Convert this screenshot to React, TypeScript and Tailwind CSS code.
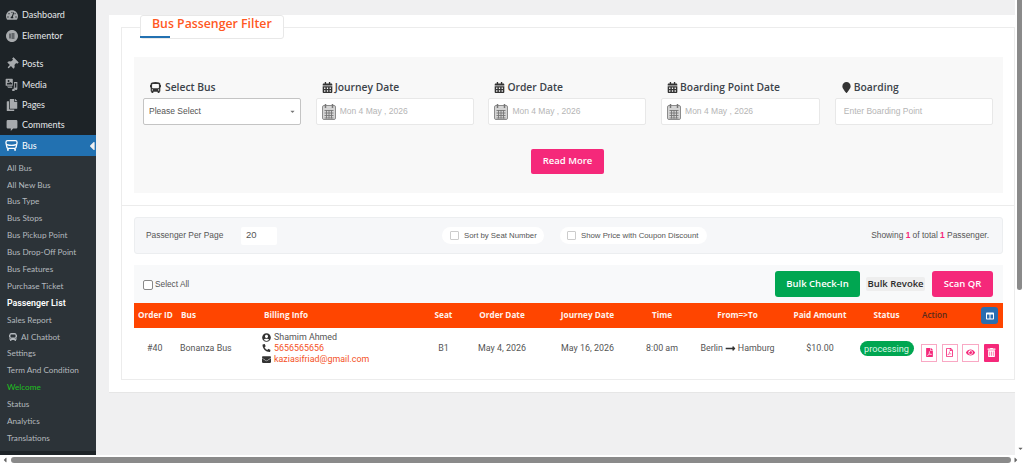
import React from 'react';
import { FaBus, FaCalendarAlt, FaMapMarker, FaUserCircle, FaPhoneAlt, FaEnvelope, FaLongArrowAltRight, FaTrashAlt, FaEye, FaFilePdf, FaRegFilePdf, FaColumns, FaThumbtack, FaCopy, FaCaretDown, FaCaretLeft, FaCaretRight, FaTachometerAlt } from 'react-icons/fa';
import { SiElementor } from 'react-icons/si';

const MediaIcon = () => (
  <svg width="13" height="13" viewBox="0 0 20 20" fill="currentColor">
    <path d="M1 2a1 1 0 0 1 1-1h9a1 1 0 0 1 1 1v9a1 1 0 0 1-1 1H2a1 1 0 0 1-1-1V2zm3 2.5a1.5 1.5 0 1 0 3 0 1.5 1.5 0 0 0-3 0zM3 10h8V8L8 6 6 8 5 7l-2 1.5V10z" fillRule="evenodd" />
    <path d="M14 6h5v10.5a2 2 0 1 1-1.5-1.9V8H15v10.5a2 2 0 1 1-1.5-1.9L14 6zM3 13h8v2H5l-2-2z" />
  </svg>
);

const CommentIcon = () => (
  <svg width="12" height="13" viewBox="0 0 20 20" fill="currentColor">
    <path d="M3 1h14a2 2 0 0 1 2 2v10a2 2 0 0 1-2 2h-5l-4 4v-4H3a2 2 0 0 1-2-2V3a2 2 0 0 1 2-2z" />
  </svg>
);

const BusOutlineIcon = () => (
  <svg width="13" height="13" viewBox="0 0 20 20" fill="none" stroke="currentColor" strokeWidth="2">
    <path d="M4 2.5h12c1.5 0 2.5 1 2.5 2.5v1L17 13c-.2 1-1 1.500-2 1.500H5c-1 0-1.800-.5-2-1.500L1.500 6V5c0-1.500 1-2.500 2.500-2.500z" />
    <path d="M3 8.500c4 1.500 10 1.500 14 0" />
    <path d="M4.500 15v3M15.500 15v3" strokeWidth="2.500" />
  </svg>
);

const GridCalendar = () => (
  <svg width="14" height="16" viewBox="0 0 14 16" className="shrink-0">
    <rect x="0.500" y="1.500" width="13" height="14" rx="1.500" fill="#d4d4d4" stroke="#8c8c8c" />
    <path d="M3.500 0v4M10.500 0v4" stroke="#777" strokeWidth="1.500" />
    <path d="M2.500 6.500h9M2.500 9h9M2.500 11.500h9M2.500 14h9M4.500 6v8.500M7 6v8.500M9.500 6v8.500" stroke="#777" strokeWidth="0.900" />
  </svg>
);

const topMenu = [
  { label: 'Posts', icon: <FaThumbtack size={12} className="rotate-45" /> },
  { label: 'Media', icon: <MediaIcon /> },
  { label: 'Pages', icon: <FaCopy size={12} /> },
  { label: 'Comments', icon: <CommentIcon /> },
];

const subMenu = ['All Bus', 'All New Bus', 'Bus Type', 'Bus Stops', 'Bus Pickup Point', 'Bus Drop-Off Point', 'Bus Features', 'Purchase Ticket'];
const subMenu2 = ['Settings', 'Term And Condition'];
const subMenu3 = ['Status', 'Analytics', 'Translations'];

const columns = 'grid grid-cols-[41px_83px_162px_47px_70px_101px_48px_103px_62px_71px_81px]';

const MenuRow = ({ label, icon }: { label: string; icon: React.ReactNode }) => (
  <div className="flex h-[20.4px] items-center text-[#e4e7e9]">
    <span className="flex w-[22px] justify-center pl-[1px] text-[#a7aaad]">{icon}</span>
    <span>{label}</span>
  </div>
);

const SubRow = ({ children, className = 'text-[#b4b9be]' }: { children: React.ReactNode; className?: string }) => (
  <div className={`flex h-[16.9px] items-center pl-[7px] ${className}`}>{children}</div>
);

const DateField = ({ label, width }: { label: string; width: string }) => (
  <div className={width}>
    <div className="mb-[3px] mt-[1px] flex h-[15px] items-center gap-[2px] pl-[6px] font-semibold text-[#3c434a]">
      <FaCalendarAlt size={11} className="text-[#333]" />
      <span>{label}</span>
    </div>
    <div className="flex h-[27px] items-center gap-[4px] rounded-[2px] border border-[#e8e8e8] bg-white pl-[5px] font-['Liberation_Sans',sans-serif] text-[8.500px] text-[#b5b5b5]">
      <GridCalendar />
      <span>Mon 4 May , 2026</span>
    </div>
  </div>
);

const ActionBox = ({ children }: { children: React.ReactNode }) => (
  <span className="flex h-[18px] w-[16px] items-center justify-center border border-[#f9a8c4] text-[#f5287a]">{children}</span>
);

export default function App() {
  return (
    <div className="flex h-[464px] w-[1024px] flex-col overflow-hidden bg-[#f0f0f1] font-['Open_Sans',sans-serif]">
      <div className="flex h-[455px]">
        {/* admin menu */}
        <aside className="flex w-[96px] shrink-0 flex-col bg-[#1d2327] pt-[5px] font-['Lato',sans-serif] text-[9px]">
          <MenuRow label="Dashboard" icon={<FaTachometerAlt size={12} />} />
          <MenuRow label="Elementor" icon={<SiElementor size={12} />} />
          <div className="h-[8px]" />
          {topMenu.map((m) => (
            <MenuRow key={m.label} label={m.label} icon={m.icon} />
          ))}
          <div className="relative flex h-[21px] items-center bg-[#2271b1] text-white">
            <span className="flex w-[22px] justify-center pl-[1px]"><BusOutlineIcon /></span>
            <span>Bus</span>
            <FaCaretLeft size={14} className="absolute right-[-3px] text-[#f0f0f1]" />
          </div>
          <div className="flex h-[295px] flex-col bg-[#2c3338] pt-[3px] text-[8.200px] leading-none">
            {subMenu.map((s) => <SubRow key={s}>{s}</SubRow>)}
            <SubRow className="font-['Roboto',sans-serif] text-[8.800px] font-semibold text-white">Passenger List</SubRow>
            <SubRow>Sales Report</SubRow>
            <SubRow><FaBus size={8} className="ml-[2px] mr-[4px]" />AI Chatbot</SubRow>
            {subMenu2.map((s) => <SubRow key={s}>{s}</SubRow>)}
            <SubRow className="text-[#1fc01f]">Welcome</SubRow>
            {subMenu3.map((s) => <SubRow key={s}>{s}</SubRow>)}
          </div>
        </aside>

        {/* page */}
        <main className="w-[919px] shrink-0 pl-[13px] pt-[15px]">
          <div className="relative h-[378px] border-b border-[#e6e6e6] bg-white pl-[12px] pt-[12px]">
            <div className="absolute left-[31px] top-0 z-10 h-[24px] w-[144px] rounded-[3px] border border-[#e8e8e8] bg-white pl-[11px] text-[12.300px] font-semibold leading-[16px] text-[#ff5722]">
              Bus Passenger Filter
              <span className="absolute bottom-0 left-[-1px] h-[2px] w-[30px] bg-[#2271b1]" />
            </div>

            <section className="h-[178px] border-l border-r border-t border-[#ececec] pl-[12px] pr-[11px] pt-[29px]">
              <div className="flex h-[136px] flex-col bg-[#f8f8f8] pl-[9px] pt-[22px] text-[10.300px]">
                <div className="flex gap-[14.700px]">
                  <div className="w-[158px]">
                    <div className="mb-[3px] mt-[1px] flex h-[15px] items-center gap-[4px] pl-[7px] font-semibold text-[#3c434a]">
                      <FaBus size={11} className="text-[#333]" />
                      <span>Select Bus</span>
                    </div>
                    <div className="flex h-[27px] items-center justify-between rounded-[2px] border border-[#c4c4c4] bg-white pl-[5px] pr-[4px] font-['Liberation_Sans',sans-serif] text-[8.500px] text-[#555]">
                      <span>Please Select</span>
                      <FaCaretDown size={7} className="text-[#777]" />
                    </div>
                  </div>
                  <DateField label="Journey Date" width="w-[158px]" />
                  <DateField label="Order Date" width="w-[158px]" />
                  <DateField label="Boarding Point Date" width="w-[159px]" />
                  <div className="w-[158px]">
                    <div className="mb-[3px] mt-[1px] flex h-[15px] items-center gap-[2px] pl-[6px] font-semibold text-[#3c434a]">
                      <FaMapMarker size={11} className="text-[#333]" />
                      <span>Boarding</span>
                    </div>
                    <div className="flex h-[27px] items-center rounded-[2px] border border-[#e8e8e8] bg-white pl-[8px] font-['Liberation_Sans',sans-serif] text-[8.500px] text-[#b5b5b5]">
                      Enter Boarding Point
                    </div>
                  </div>
                </div>
                <button className="ml-[388px] mt-[24px] h-[25px] w-[73px] rounded-[2px] bg-[#f5287a] text-[9.500px] font-semibold text-white">Read More</button>
              </div>
            </section>

            <section className="h-[175px] border-b border-l border-r border-t border-[#ececec] pl-[12px] pr-[11px] pt-[11px]">
              <div className="flex h-[37px] items-center rounded-[3px] border border-[#eceef0] bg-[#f6f7f9] pl-[11px] pr-[13px] font-['Liberation_Sans',sans-serif] text-[8.400px] text-[#555]">
                <span className="w-[95px]">Passenger Per Page</span>
                <span className="flex h-[18px] w-[36px] items-center rounded-[2px] bg-white pl-[5px] text-[9.500px]">20</span>
                <span className="ml-[165px] flex h-[17px] w-[102px] items-center gap-[5px] rounded-full bg-white pl-[8px] text-[7.800px]">
                  <span className="h-[9px] w-[9px] rounded-[1px] border border-[#ccc]" />Sort by Seat Number
                </span>
                <span className="ml-[16px] flex h-[17px] w-[147px] items-center gap-[5px] rounded-full bg-white pl-[7px] text-[7.800px]">
                  <span className="h-[9px] w-[9px] rounded-[1px] border border-[#ccc]" />Show Price with Coupon Discount
                </span>
                <span className="ml-auto">Showing <b className="text-[#f5287a]">1</b> of total <b className="text-[#f5287a]">1</b> Passenger.</span>
              </div>

              <div className="mt-[11px] flex h-[38px] items-center bg-[#f8f9fa] pl-[9px] pr-[10px]">
                <span className="flex items-center gap-[2px] font-['Liberation_Sans',sans-serif] text-[8.300px] text-[#555]">
                  <span className="mt-[1px] h-[10px] w-[10px] rounded-[2px] border border-[#888] bg-white" />Select All
                </span>
                <button className="ml-auto h-[26px] w-[85px] rounded-[3px] bg-[#00a651] text-[9.500px] font-semibold text-white">Bulk Check-In</button>
                <button className="ml-[6px] h-[14px] w-[59px] rounded-[2px] bg-[#eeeeee] text-[9.500px] font-semibold text-[#2b2b2b]">Bulk Revoke</button>
                <button className="ml-[7px] h-[26px] w-[61px] rounded-[3px] bg-[#f5287a] text-[9.500px] font-semibold text-white">Scan QR</button>
              </div>

              <div className={`${columns} relative h-[25px] items-center bg-[#ff4500] text-[8.200px] font-bold text-[#fdf3ee]`}>
                <span className="pl-[4px]">Order ID</span>
                <span className="pl-[6px]">Bus</span>
                <span className="pl-[6px]">Billing Info</span>
                <span className="text-center">Seat</span>
                <span className="text-center">Order Date</span>
                <span className="text-center">Journey Date</span>
                <span className="text-center">Time</span>
                <span className="text-center">From=&gt;To</span>
                <span className="text-center">Paid Amount</span>
                <span className="text-center">Status</span>
                <span className="font-semibold text-[#5a2a1a]">Action</span>
                <span className="absolute right-[5px] top-[4px] flex h-[17px] w-[17px] items-center justify-center rounded-[3px] bg-[#2a6db0] text-white"><FaColumns size={8} /></span>
              </div>

              <div className={`${columns} h-[41px] items-center font-['Roboto',sans-serif] text-[8.900px] text-[#555]`}>
                <span className="pl-[13px]">#40</span>
                <span className="pl-[5px]">Bonanza Bus</span>
                <div className="flex flex-col pl-[4px] leading-[11.300px]">
                  <span className="flex items-center gap-[3px]"><FaUserCircle size={9} className="text-[#333]" />Shamim Ahmed</span>
                  <span className="flex items-center gap-[3px] text-[#f4511e]"><FaPhoneAlt size={8} className="w-[9px] text-[#333]" />5656565656</span>
                  <span className="flex items-center gap-[3px] text-[#f4511e]"><FaEnvelope size={9} className="text-[#333]" />kaziasifriad@gmail.com</span>
                </div>
                <span className="text-center">B1</span>
                <span className="text-center">May 4, 2026</span>
                <span className="text-center">May 16, 2026</span>
                <span className="text-center">8:00 am</span>
                <span className="flex items-center justify-center gap-[2px]">Berlin <FaLongArrowAltRight size={11} className="text-[#333]" /> Hamburg</span>
                <span className="text-center">$10.00</span>
                <span className="flex justify-center"><span className="flex h-[15px] w-[54px] items-center justify-center rounded-full bg-[#00a651] text-[9.200px] text-[#d8f5e4]">processing</span></span>
                <div className="-ml-[1px] mt-[8px] flex items-center gap-[4.500px]">
                  <ActionBox><FaFilePdf size={9} /></ActionBox>
                  <ActionBox><FaRegFilePdf size={9} /></ActionBox>
                  <span className="flex h-[18px] w-[17px] items-center justify-center border border-[#f9a8c4] text-[#f5287a]"><FaEye size={9} /></span>
                  <span className="flex h-[18px] w-[15px] items-center justify-center rounded-[1px] bg-[#f5287a] text-white"><FaTrashAlt size={9} /></span>
                </div>
              </div>
            </section>
          </div>
        </main>

        {/* vertical scrollbar */}
        <div className="flex w-[9px] shrink-0 flex-col bg-white pl-[2px]">
          <div className="h-[290px] w-[5px] rounded-b-full bg-[#8a8a8a]" />
          <div className="mb-[3px] mt-auto text-[#666]"><FaCaretDown size={7} /></div>
        </div>
      </div>

      {/* horizontal scrollbar */}
      <div className="flex h-[9px] items-center bg-white px-[1px] text-[#666]">
        <FaCaretLeft size={8} />
        <div className="ml-[2px] h-[6px] w-[1000px] rounded-full bg-[#8a8a8a]" />
        <FaCaretRight size={8} className="ml-[1px]" />
      </div>
    </div>
  );
}
